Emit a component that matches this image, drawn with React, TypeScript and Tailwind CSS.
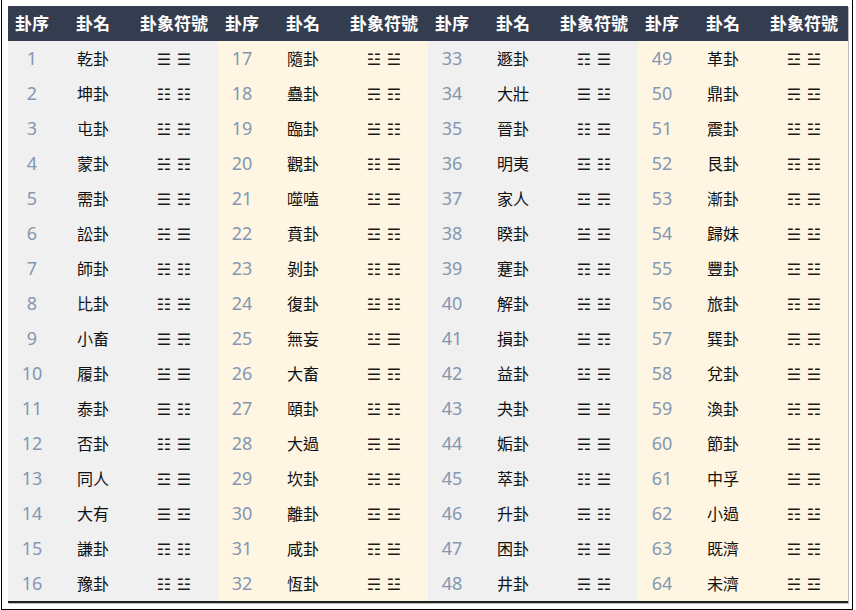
const T: Record<string, string> = {
  Q: '☰',
  D: '☱',
  L: '☲',
  Z: '☳',
  X: '☴',
  K: '☵',
  G: '☶',
  C: '☷',
};

// name, upper, lower
const hexagrams: [string, string, string][] = [
  ['乾卦', 'Q', 'Q'], ['坤卦', 'C', 'C'], ['屯卦', 'K', 'Z'], ['蒙卦', 'G', 'K'],
  ['需卦', 'K', 'Q'], ['訟卦', 'Q', 'K'], ['師卦', 'C', 'K'], ['比卦', 'K', 'C'],
  ['小畜', 'X', 'Q'], ['履卦', 'Q', 'D'], ['泰卦', 'C', 'Q'], ['否卦', 'Q', 'C'],
  ['同人', 'Q', 'L'], ['大有', 'L', 'Q'], ['謙卦', 'C', 'G'], ['豫卦', 'Z', 'C'],
  ['隨卦', 'D', 'Z'], ['蠱卦', 'G', 'X'], ['臨卦', 'C', 'D'], ['觀卦', 'X', 'C'],
  ['噬嗑', 'L', 'Z'], ['賁卦', 'G', 'L'], ['剝卦', 'G', 'C'], ['復卦', 'C', 'Z'],
  ['無妄', 'Q', 'Z'], ['大畜', 'G', 'Q'], ['頤卦', 'G', 'Z'], ['大過', 'D', 'X'],
  ['坎卦', 'K', 'K'], ['離卦', 'L', 'L'], ['咸卦', 'D', 'G'], ['恆卦', 'Z', 'X'],
  ['遯卦', 'Q', 'G'], ['大壯', 'Z', 'Q'], ['晉卦', 'L', 'C'], ['明夷', 'C', 'L'],
  ['家人', 'X', 'L'], ['睽卦', 'L', 'D'], ['蹇卦', 'K', 'G'], ['解卦', 'Z', 'K'],
  ['損卦', 'G', 'D'], ['益卦', 'X', 'Z'], ['夬卦', 'D', 'Q'], ['姤卦', 'Q', 'X'],
  ['萃卦', 'D', 'C'], ['升卦', 'C', 'X'], ['困卦', 'D', 'K'], ['井卦', 'K', 'X'],
  ['革卦', 'D', 'L'], ['鼎卦', 'L', 'X'], ['震卦', 'Z', 'Z'], ['艮卦', 'G', 'G'],
  ['漸卦', 'X', 'G'], ['歸妹', 'Z', 'D'], ['豐卦', 'Z', 'L'], ['旅卦', 'L', 'G'],
  ['巽卦', 'X', 'X'], ['兌卦', 'D', 'D'], ['渙卦', 'X', 'K'], ['節卦', 'K', 'D'],
  ['中孚', 'X', 'D'], ['小過', 'Z', 'G'], ['既濟', 'K', 'L'], ['未濟', 'L', 'K'],
];

const groupBg = ['bg-[#f0f0f0]', 'bg-[#fef6e3]', 'bg-[#f0f0f0]', 'bg-[#fef6e3]'];

export default function App() {
  const rows = Array.from({ length: 16 }, (_, r) => r);

  return (
    <div
      className="ml-px h-[610px] w-[852px] border-x border-b border-black bg-white pt-[6px] pl-[6px]"
      style={{ fontFamily: '"Noto Sans", "Noto Sans CJK TC", sans-serif' }}
    >
      <div className="grid w-[840px] grid-cols-[48px_74px_88px_48px_74px_88px_48px_74px_88px_48px_74px_88px] border-b-2 border-[#222] shadow-[1px_1px_0_#bbb]">
        {/* Header */}
        {[0, 1, 2, 3].map((g) => (
          <div key={`h${g}`} className="contents">
            <div className="flex h-[35px] items-center justify-center bg-[#343d4f] text-[17px] font-bold text-white">卦序</div>
            <div className="flex h-[35px] items-center justify-center bg-[#343d4f] text-[17px] font-bold text-white">卦名</div>
            <div className="flex h-[35px] items-center justify-center bg-[#343d4f] text-[17px] font-bold text-white">卦象符號</div>
          </div>
        ))}

        {/* Rows */}
        {rows.map((r) =>
          [0, 1, 2, 3].map((g) => {
            const n = g * 16 + r + 1;
            const [name, upper, lower] = hexagrams[n - 1];
            const bg = groupBg[g];
            return (
              <div key={`${r}-${g}`} className="contents">
                <div className={`flex h-[35px] items-center justify-center ${bg} text-[18px] text-[#8597b1]`}>{n}</div>
                <div className={`flex h-[35px] items-center justify-center ${bg} text-[16px] text-[#111]`}>{name}</div>
                <div
                  className={`flex h-[35px] items-center justify-center pt-[2px] ${bg} text-[16px] font-bold text-[#1a1a1a]`}
                  style={{ fontFamily: '"DejaVu Sans", sans-serif' }}
                >
                  {T[lower]} {T[upper]}
                </div>
              </div>
            );
          })
        )}
      </div>
    </div>
  );
}
